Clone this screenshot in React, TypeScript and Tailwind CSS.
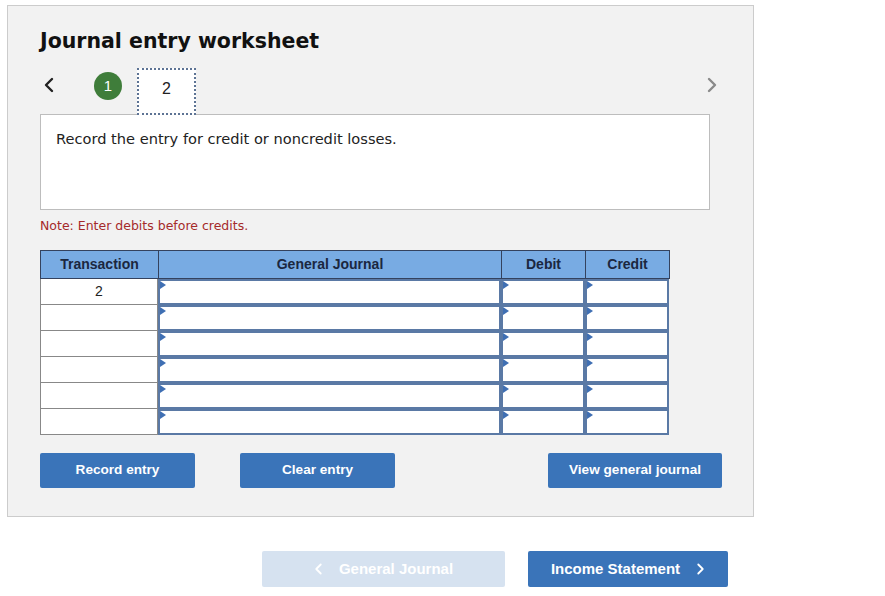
import React from "react";

const verdana = { fontFamily: '"DejaVu Sans", Verdana, sans-serif' };
const arial = { fontFamily: '"Liberation Sans", Arial, sans-serif' };

function Chevron({ dir, className, size = 16 }: { dir: "left" | "right"; className?: string; size?: number }) {
  return (
    <svg width={(size * 12) / 16} height={size} viewBox="0 0 12 16" className={className}>
      <path
        d={dir === "left" ? "M9 2 L3 8 L9 14" : "M3 2 L9 8 L3 14"}
        fill="none"
        stroke="currentColor"
        strokeWidth="2.4"
        strokeLinecap="round"
        strokeLinejoin="round"
      />
    </svg>
  );
}

function InputCell() {
  return (
    <div className="relative h-full border-2 border-[#5a79a5] bg-white">
      <div className="absolute left-0 top-0 h-0 w-0 border-y-[4px] border-l-[6px] border-y-transparent border-l-[#3f6fb3]" />
    </div>
  );
}

export default function App() {
  const rows = ["2", "", "", "", "", ""];
  return (
    <div className="h-[596px] w-[885px] bg-white pl-[7px] pt-[5px]">
      <div className="h-[512px] w-[747px] border border-[#cccccc] bg-[#f2f2f2] pl-[32px] pt-[23px]">
        <h1 className="text-[20.5px] font-bold leading-[24px] text-[#111]" style={verdana}>
          Journal entry worksheet
        </h1>

        <div className="mt-[15px] flex h-[47px] items-start">
          <Chevron dir="left" className="ml-[3px] mt-[9px] text-[#222]" />
          <div
            className="ml-[39px] mt-[4px] flex h-[28px] w-[28px] items-center justify-center rounded-full bg-[#3f7d3a] text-[15px] text-white"
            style={arial}
          >
            1
          </div>
          <div
            className="relative z-10 ml-[15px] flex h-[47px] w-[59px] justify-center border-2 border-dotted border-[#5d7394] bg-white pt-[7px] text-[16px] text-[#222]"
            style={arial}
          >
            2
          </div>
          <Chevron dir="right" className="ml-[510px] mt-[9px] text-[#8a8a8a]" />
        </div>

        <div
          className="-mt-px h-[96px] w-[670px] border border-[#bdbdbd] bg-white px-[15px] pt-[15px] text-[14.6px] leading-[18px] text-[#222]"
          style={verdana}
        >
          Record the entry for credit or noncredit losses.
        </div>

        <p className="mt-[8px] text-[12.5px] leading-[16px] text-[#a52a2a]" style={verdana}>
          Note: Enter debits before credits.
        </p>

        <div className="mt-[16px] w-[630px]" style={arial}>
          <div className="grid grid-cols-[118px_343px_84px_84px] border-l border-t border-[#34425e] bg-[#78abe3] text-[14px] font-bold text-[#1b2740]">
            {["Transaction", "General Journal", "Debit", "Credit"].map((h) => (
              <div key={h} className="flex h-[28px] items-center justify-center border-b border-r border-[#34425e]">
                {h}
              </div>
            ))}
          </div>
          {rows.map((t, i) => (
            <div key={i} className="grid h-[26px] grid-cols-[118px_343px_84px_84px]">
              <div className="flex items-center justify-center border-b border-l border-r border-[#888] bg-white text-[14px] text-[#222]">
                {t}
              </div>
              <InputCell />
              <InputCell />
              <InputCell />
            </div>
          ))}
        </div>

        <div className="mt-[18px] flex text-[13.6px] font-bold text-white" style={arial}>
          <button className="h-[35px] w-[155px] rounded-[2px] bg-[#3a74b9]">Record entry</button>
          <button className="ml-[45px] h-[35px] w-[155px] rounded-[2px] bg-[#3a74b9]">Clear entry</button>
          <button className="ml-[153px] h-[35px] w-[174px] rounded-[2px] bg-[#3a74b9]">View general journal</button>
        </div>
      </div>

      <div className="mt-[34px] flex pl-[255px] text-[15px] font-bold text-white" style={arial}>
        <button className="flex h-[36px] w-[243px] items-center justify-center gap-[16px] rounded-[2px] bg-[#d6e2f0]">
          <Chevron dir="left" size={12} className="text-white" />
          General Journal
        </button>
        <button className="ml-[23px] flex h-[36px] w-[200px] items-center justify-center gap-[16px] rounded-[2px] bg-[#3a74b9]">
          Income Statement
          <Chevron dir="right" size={12} className="text-white" />
        </button>
      </div>
    </div>
  );
}
